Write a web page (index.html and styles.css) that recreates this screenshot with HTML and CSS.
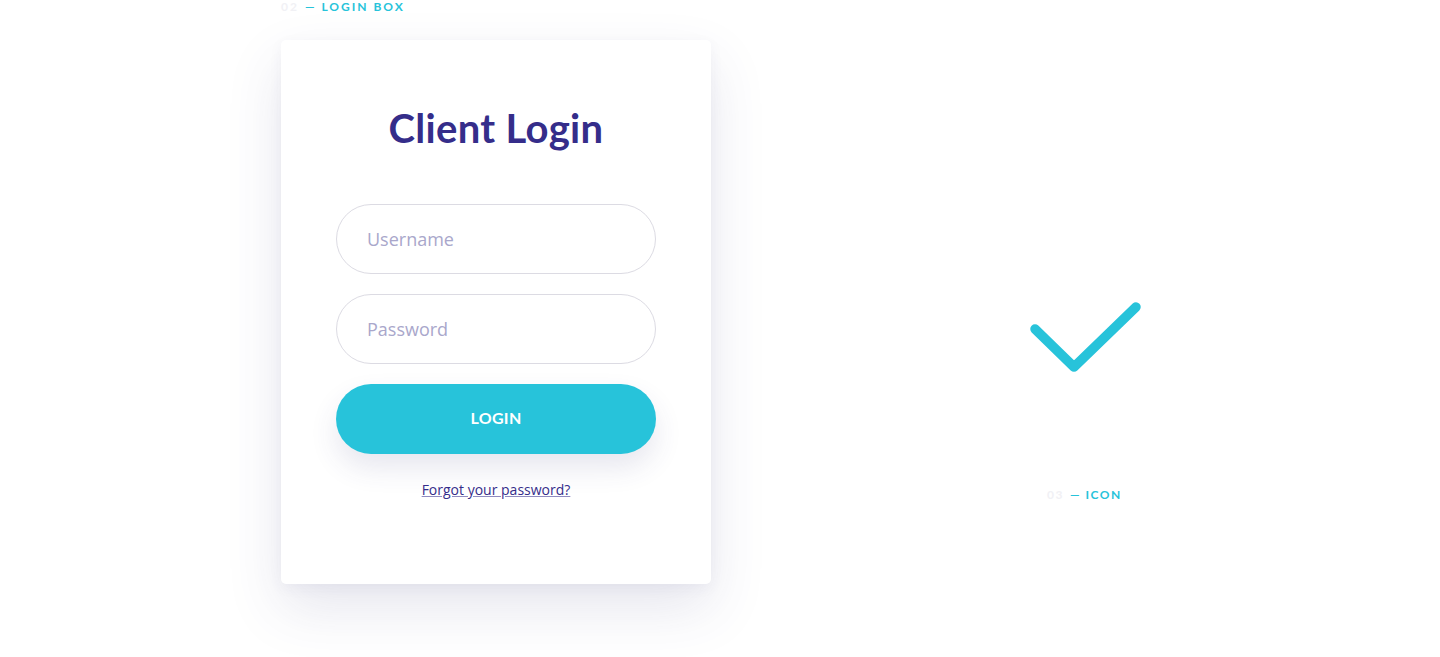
FILE: index.html
```html
<!DOCTYPE html>
<html>
<head>
<meta charset="utf-8">
<link rel="stylesheet" href="styles.css">
</head>
<body>
<div class="page">
  <section class="col-login">
    <div class="label label-top"><span class="num">02</span>— LOGIN BOX</div>
    <div class="card">
      <h1 class="title">Client Login</h1>
      <form class="form">
        <input class="field" type="text" placeholder="Username">
        <input class="field" type="password" placeholder="Password">
        <button class="btn" type="button">LOGIN</button>
      </form>
      <a class="forgot" href="#">Forgot your password?</a>
    </div>
  </section>
  <section class="col-icon">
    <svg class="check" width="120" height="80" viewBox="0 0 120 80">
      <polyline points="8,31 47,69 109,9" fill="none" stroke="#27c3da" stroke-width="9.5" stroke-linecap="round" stroke-linejoin="round"/>
    </svg>
    <div class="label label-icon"><span class="num">03</span>— ICON</div>
  </section>
</div>
</body>
</html>
```
FILE: styles.css
```css
html, body { margin: 0; padding: 0; background: #fff; }
body { font-family: "Open Sans", sans-serif; }
.page {
  display: flex;
  align-items: flex-start;
  padding-left: 281px;
  height: 657px;
  overflow: hidden;
}
.col-login { display: flex; flex-direction: column; width: 430px; }
.label {
  font-family: "Lato", sans-serif;
  font-weight: 700;
  font-size: 12px;
  letter-spacing: 1.5px;
  color: #27c3da;
  line-height: 13px;
  white-space: nowrap;
}
.label .num { color: #f1f1f5; margin-right: 6px; }
.label-top { padding-left: 0; height: 40px; letter-spacing: 2px; margin-top: 0; }
.card {
  width: 430px;
  height: 544px;
  box-sizing: border-box;
  background: #fff;
  border-radius: 5px;
  box-shadow: 0 24px 55px rgba(60, 60, 120, 0.13), 0 4px 14px rgba(60,60,120,0.05);
  display: flex;
  flex-direction: column;
  align-items: center;
  padding-top: 62px;
}
.title {
  margin: 0;
  font-family: "Lato", sans-serif;
  font-weight: 700;
  font-size: 40px;
  line-height: 52px;
  color: #352d8a;
  letter-spacing: 0.3px;
}
.form {
  margin-top: 50px;
  display: flex;
  flex-direction: column;
  gap: 20px;
  width: 320px;
}
.field {
  height: 70px;
  box-sizing: border-box;
  border: 1px solid #dcdbe3;
  border-radius: 35px;
  padding: 0 30px;
  font-family: "Open Sans", sans-serif;
  font-size: 18px;
  color: #352d8a;
  outline: none;
  background: #fff;
}
.field::placeholder { color: #a9a7cb; }
.btn {
  height: 70px;
  border: none;
  border-radius: 35px;
  background: #27c3da;
  color: #fff;
  font-family: "Lato", sans-serif;
  font-weight: 700;
  font-size: 16px;
  letter-spacing: 0.3px;
  padding: 0 0 3px;
  box-shadow: 0 14px 28px rgba(60, 60, 120, 0.12);
}
.forgot {
  margin-top: 26px;
  font-family: "Open Sans", sans-serif;
  font-size: 14px;
  color: #352d8a;
  text-decoration: underline;
  text-decoration-color: #8f8bc0;
}
.col-icon {
  margin-left: 316px;
  margin-top: 298px;
  display: flex;
  flex-direction: column;
  align-items: flex-start;
}
.check { display: block; }
.label-icon { margin-top: 110px; margin-left: 20px; }
```
